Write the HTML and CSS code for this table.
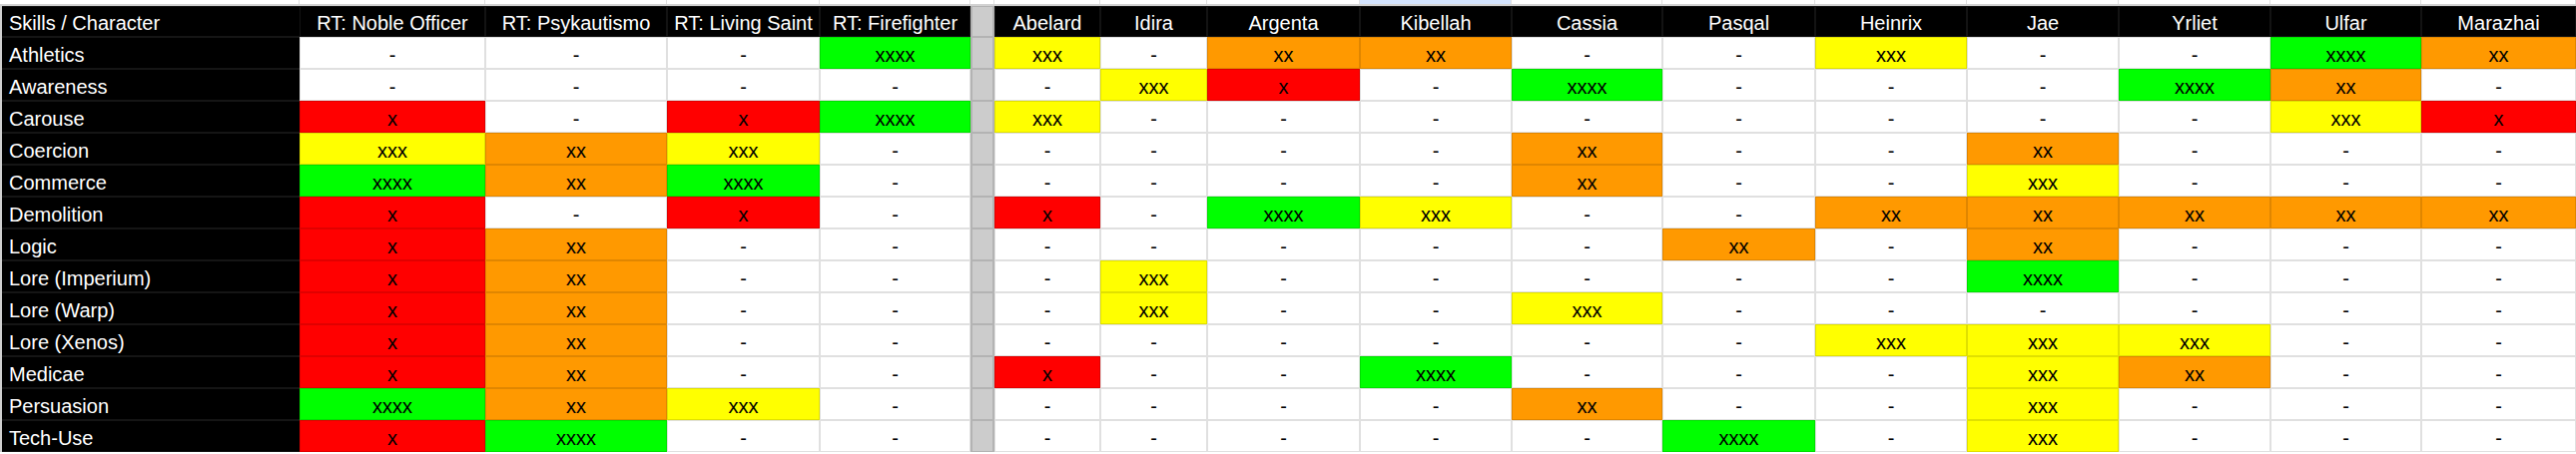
FILE: index.html
```html
<!DOCTYPE html>
<html lang="en">
<head>
<meta charset="utf-8">
<title>Skills / Character</title>
<link rel="stylesheet" href="styles.css">
</head>
<body>
<div class="sheet">
  <div class="strip">
    <div></div><div></div><div></div><div></div><div></div><div></div><div></div><div></div><div></div><div class="sel"></div><div></div><div></div><div></div><div></div><div></div><div></div><div></div>
  </div>
  <div class="row head">
    <div class="label">Skills / Character</div>
    <div class="th">RT: Noble Officer</div><div class="th">RT: Psykautismo</div><div class="th">RT: Living Saint</div><div class="th">RT: Firefighter</div>
    <div class="sep"></div>
    <div class="th">Abelard</div><div class="th">Idira</div><div class="th">Argenta</div><div class="th">Kibellah</div><div class="th">Cassia</div><div class="th">Pasqal</div><div class="th">Heinrix</div><div class="th">Jae</div><div class="th">Yrliet</div><div class="th">Ulfar</div><div class="th">Marazhai</div>
  </div>
  <div class="row">
    <div class="label">Athletics</div>
    <div class="td">-</div><div class="td">-</div><div class="td">-</div><div class="td g">xxxx</div>
    <div class="sep"></div>
    <div class="td y">xxx</div><div class="td">-</div><div class="td o">xx</div><div class="td o">xx</div><div class="td">-</div><div class="td">-</div><div class="td y">xxx</div><div class="td">-</div><div class="td">-</div><div class="td g">xxxx</div><div class="td o">xx</div>
  </div>
  <div class="row">
    <div class="label">Awareness</div>
    <div class="td">-</div><div class="td">-</div><div class="td">-</div><div class="td">-</div>
    <div class="sep"></div>
    <div class="td">-</div><div class="td y">xxx</div><div class="td r">x</div><div class="td">-</div><div class="td g">xxxx</div><div class="td">-</div><div class="td">-</div><div class="td">-</div><div class="td g">xxxx</div><div class="td o">xx</div><div class="td">-</div>
  </div>
  <div class="row">
    <div class="label">Carouse</div>
    <div class="td r">x</div><div class="td">-</div><div class="td r">x</div><div class="td g">xxxx</div>
    <div class="sep"></div>
    <div class="td y">xxx</div><div class="td">-</div><div class="td">-</div><div class="td">-</div><div class="td">-</div><div class="td">-</div><div class="td">-</div><div class="td">-</div><div class="td">-</div><div class="td y">xxx</div><div class="td r">x</div>
  </div>
  <div class="row">
    <div class="label">Coercion</div>
    <div class="td y">xxx</div><div class="td o">xx</div><div class="td y">xxx</div><div class="td">-</div>
    <div class="sep"></div>
    <div class="td">-</div><div class="td">-</div><div class="td">-</div><div class="td">-</div><div class="td o">xx</div><div class="td">-</div><div class="td">-</div><div class="td o">xx</div><div class="td">-</div><div class="td">-</div><div class="td">-</div>
  </div>
  <div class="row">
    <div class="label">Commerce</div>
    <div class="td g">xxxx</div><div class="td o">xx</div><div class="td g">xxxx</div><div class="td">-</div>
    <div class="sep"></div>
    <div class="td">-</div><div class="td">-</div><div class="td">-</div><div class="td">-</div><div class="td o">xx</div><div class="td">-</div><div class="td">-</div><div class="td y">xxx</div><div class="td">-</div><div class="td">-</div><div class="td">-</div>
  </div>
  <div class="row">
    <div class="label">Demolition</div>
    <div class="td r">x</div><div class="td">-</div><div class="td r">x</div><div class="td">-</div>
    <div class="sep"></div>
    <div class="td r">x</div><div class="td">-</div><div class="td g">xxxx</div><div class="td y">xxx</div><div class="td">-</div><div class="td">-</div><div class="td o">xx</div><div class="td o">xx</div><div class="td o">xx</div><div class="td o">xx</div><div class="td o">xx</div>
  </div>
  <div class="row">
    <div class="label">Logic</div>
    <div class="td r">x</div><div class="td o">xx</div><div class="td">-</div><div class="td">-</div>
    <div class="sep"></div>
    <div class="td">-</div><div class="td">-</div><div class="td">-</div><div class="td">-</div><div class="td">-</div><div class="td o">xx</div><div class="td">-</div><div class="td o">xx</div><div class="td">-</div><div class="td">-</div><div class="td">-</div>
  </div>
  <div class="row">
    <div class="label">Lore (Imperium)</div>
    <div class="td r">x</div><div class="td o">xx</div><div class="td">-</div><div class="td">-</div>
    <div class="sep"></div>
    <div class="td">-</div><div class="td y">xxx</div><div class="td">-</div><div class="td">-</div><div class="td">-</div><div class="td">-</div><div class="td">-</div><div class="td g">xxxx</div><div class="td">-</div><div class="td">-</div><div class="td">-</div>
  </div>
  <div class="row">
    <div class="label">Lore (Warp)</div>
    <div class="td r">x</div><div class="td o">xx</div><div class="td">-</div><div class="td">-</div>
    <div class="sep"></div>
    <div class="td">-</div><div class="td y">xxx</div><div class="td">-</div><div class="td">-</div><div class="td y">xxx</div><div class="td">-</div><div class="td">-</div><div class="td">-</div><div class="td">-</div><div class="td">-</div><div class="td">-</div>
  </div>
  <div class="row">
    <div class="label">Lore (Xenos)</div>
    <div class="td r">x</div><div class="td o">xx</div><div class="td">-</div><div class="td">-</div>
    <div class="sep"></div>
    <div class="td">-</div><div class="td">-</div><div class="td">-</div><div class="td">-</div><div class="td">-</div><div class="td">-</div><div class="td y">xxx</div><div class="td y">xxx</div><div class="td y">xxx</div><div class="td">-</div><div class="td">-</div>
  </div>
  <div class="row">
    <div class="label">Medicae</div>
    <div class="td r">x</div><div class="td o">xx</div><div class="td">-</div><div class="td">-</div>
    <div class="sep"></div>
    <div class="td r">x</div><div class="td">-</div><div class="td">-</div><div class="td g">xxxx</div><div class="td">-</div><div class="td">-</div><div class="td">-</div><div class="td y">xxx</div><div class="td o">xx</div><div class="td">-</div><div class="td">-</div>
  </div>
  <div class="row">
    <div class="label">Persuasion</div>
    <div class="td g">xxxx</div><div class="td o">xx</div><div class="td y">xxx</div><div class="td">-</div>
    <div class="sep"></div>
    <div class="td">-</div><div class="td">-</div><div class="td">-</div><div class="td">-</div><div class="td o">xx</div><div class="td">-</div><div class="td">-</div><div class="td y">xxx</div><div class="td">-</div><div class="td">-</div><div class="td">-</div>
  </div>
  <div class="row">
    <div class="label">Tech-Use</div>
    <div class="td r">x</div><div class="td g">xxxx</div><div class="td">-</div><div class="td">-</div>
    <div class="sep"></div>
    <div class="td">-</div><div class="td">-</div><div class="td">-</div><div class="td">-</div><div class="td">-</div><div class="td g">xxxx</div><div class="td">-</div><div class="td y">xxx</div><div class="td">-</div><div class="td">-</div><div class="td">-</div>
  </div>
</div>
</body>
</html>
```
FILE: styles.css
```css
* {
  box-sizing: border-box;
  margin: 0;
  padding: 0;
}

body {
  background: #ffffff;
  font-family: "Liberation Sans", Arial, sans-serif;
  font-size: 20px;
  color: #000000;
}

.sheet {
  --cols: 300px 186px 182px 153px 151px 24px 106px 107px 153px 152px 151px 153px 152px 152px 152px 151px 155px;
  width: 2580px;
}

.strip {
  display: grid;
  grid-template-columns: var(--cols);
  height: 6px;
  border-bottom: 2px solid #d2d2d2;
}

.strip > div {
  border-right: 1px solid #e0e0e0;
}

.strip > .sel {
  background: #d3e3fd;
}

.row {
  display: grid;
  grid-template-columns: var(--cols);
  height: 32px;
}

.row.head {
  height: 31px;
}

.label,
.th,
.td {
  display: flex;
  align-items: flex-end;
  line-height: 23px;
  padding-bottom: 2px;
  white-space: nowrap;
  overflow: hidden;
}

.label {
  background: #000000;
  color: #ffffff;
  padding-left: 7px;
  border-left: 2px solid #cfcfcf;
  box-shadow: inset 0 -1px 0 #151515, inset 0 1px 0 #151515;
}

.th {
  justify-content: center;
  background: #000000;
  color: #ffffff;
  box-shadow: inset 0 0 0 1px #131313;
}

.td {
  justify-content: center;
  background: #ffffff;
  box-shadow: inset 0 0 0 1px rgba(0, 0, 0, 0.12);
}

.td.r { background: #ff0000; }
.td.o { background: #ff9900; }
.td.y { background: #ffff00; }
.td.g { background: #00ff00; }

.sep {
  background: #cccccc;
  border-left: 2px solid #b3b3b3;
  border-right: 2px solid #b3b3b3;
  box-shadow: inset 0 -1px 0 #b3b3b3, inset 0 1px 0 #b3b3b3;
}
```
